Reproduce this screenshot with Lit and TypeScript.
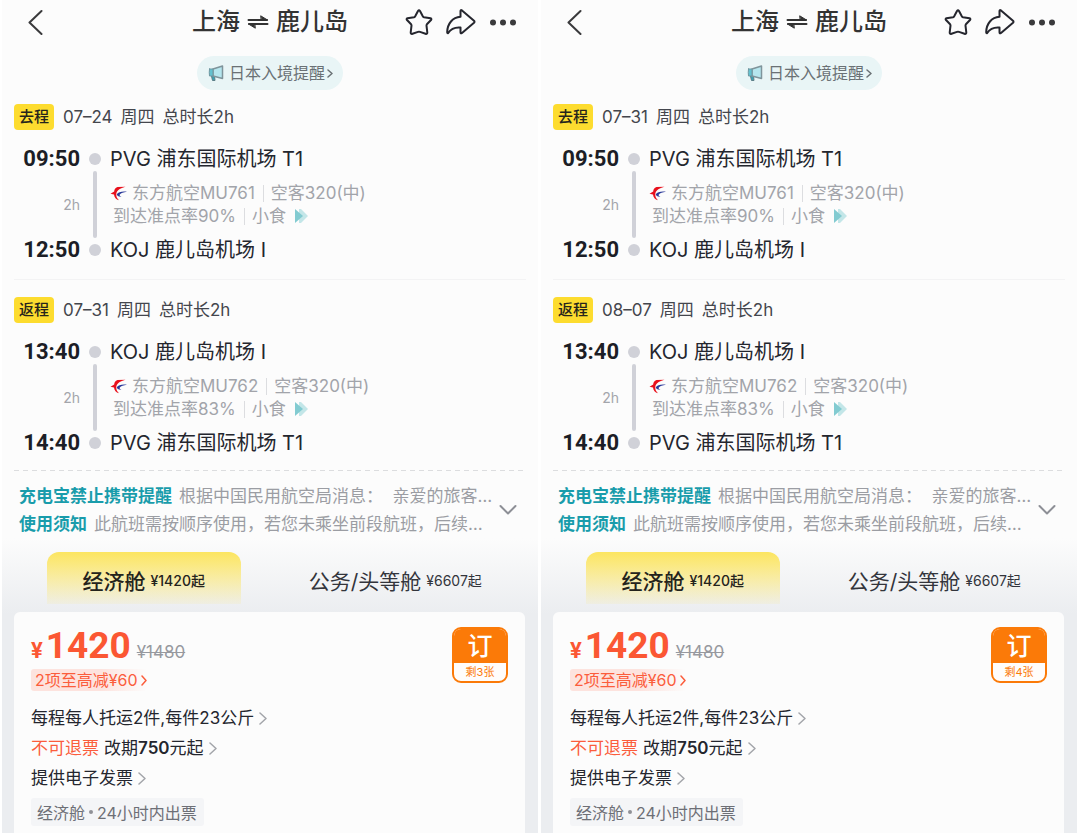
import { LitElement, html, css, svg } from "lit";
import { customElement, property } from "lit/decorators.js";

interface Leg {
  tag: string;
  date: string;
  depart: string;
  from: string;
  arrive: string;
  to: string;
  flight: string;
  onTime: string;
}

interface Trip {
  legs: Leg[];
  left: number;
}

const PVG = "PVG 浦东国际机场 T1";
const KOJ = "KOJ 鹿儿岛机场 I";

const makeTrip = (out: string, back: string, left: number): Trip => ({
  left,
  legs: [
    { tag: "去程", date: out, depart: "09:50", from: PVG, arrive: "12:50", to: KOJ, flight: "MU761", onTime: "90%" },
    { tag: "返程", date: back, depart: "13:40", from: KOJ, arrive: "14:40", to: PVG, flight: "MU762", onTime: "83%" },
  ],
});

const trips: Trip[] = [makeTrip("07–24", "07–31", 3), makeTrip("07–31", "08–07", 4)];

const reset = css`
  * {
    box-sizing: border-box;
  }
  button {
    font: inherit;
    color: inherit;
    background: none;
    border: 0;
    padding: 0;
    margin: 0;
    text-align: left;
    cursor: pointer;
  }
  p,
  h1 {
    margin: 0;
    padding: 0;
  }
  svg {
    display: block;
    flex: none;
    fill: none;
    stroke-linecap: round;
    stroke-linejoin: round;
  }
`;

const chevron = (w: number, h: number, color: string, stroke: number) => html`
  <svg width=${w} height=${h} viewBox="0 0 ${w} ${h}" aria-hidden="true">
    ${svg`<path d="M1 1 L${w - 1} ${h / 2} L1 ${h - 1}" stroke=${color} stroke-width=${stroke} />`}
  </svg>
`;

@customElement("flight-leg")
class FlightLeg extends LitElement {
  @property({ attribute: false }) leg!: Leg;

  static styles = [
    reset,
    css`
      :host {
        display: block;
      }
      .head {
        display: flex;
        align-items: center;
        gap: 9px;
        height: 26px;
        font-size: 17px;
        color: #44464d;
        white-space: nowrap;
      }
      .tag {
        display: grid;
        place-items: center;
        width: 40px;
        height: 26px;
        border-radius: 4px;
        background: #fddc2f;
        color: #26241c;
        font-size: 15px;
        line-height: 24px;
        font-weight: 500;
      }
      .words {
        display: flex;
        align-items: baseline;
        gap: 8px;
        line-height: 24px;
      }
      .timeline {
        display: grid;
        grid-template-columns: 66px 30px 1fr;
        grid-template-rows: 30px 61px 30px;
        margin-top: 14px;
        align-items: center;
      }
      .time {
        grid-column: 1;
        text-align: right;
        font: 700 22px/30px Roboto, sans-serif;
        color: #1c1e26;
      }
      .place {
        grid-column: 3;
        font-size: 20px;
        line-height: 30px;
        color: #24262e;
        white-space: nowrap;
      }
      .duration {
        grid-column: 1;
        text-align: right;
        font-size: 14px;
        color: #a3a5ab;
      }
      .rail {
        grid-column: 2;
        grid-row: 1 / 4;
        align-self: stretch;
        display: flex;
        flex-direction: column;
        align-items: center;
        gap: 6px;
        padding: 9px 0;
      }
      .dot {
        width: 12px;
        height: 12px;
        border-radius: 50%;
        background: #d0d1d8;
      }
      .bar {
        flex: 1;
        width: 4px;
        border-radius: 2px;
        background: #d0d1d8;
      }
      .info {
        grid-column: 3;
        font-size: 17px;
        line-height: 23px;
        color: #a2a4aa;
        white-space: nowrap;
      }
      .line {
        display: flex;
        align-items: center;
      }
      .line + .line {
        padding-left: 3px;
      }
      .logo {
        margin-right: 5px;
      }
      .sep {
        width: 1px;
        height: 17px;
        margin: 0 7px 0 8px;
        background: #dcdde0;
      }
      .more {
        margin-left: 9px;
      }
    `,
  ];

  render() {
    const l = this.leg;
    return html`
      <div class="head">
        <span class="tag">${l.tag}</span>
        <span class="words"><span>${l.date}</span><span>周四</span><span>总时长2h</span></span>
      </div>
      <div class="timeline">
        <span class="time">${l.depart}</span>
        <span class="rail"><i class="dot"></i><i class="bar"></i><i class="dot"></i></span>
        <span class="place">${l.from}</span>
        <span class="duration">2h</span>
        <div class="info">
          <div class="line">
            <svg class="logo" width="17" height="15" viewBox="0 0 17 15" aria-hidden="true">
              <path d="M15.500 0.800 L7.500 1 C5.300 1.500 4.300 3.500 4.200 5.500 L0.500 7.800 L4 8.500 C4.300 11.500 6 13.800 9 14.200 C7 12.500 6.200 10.500 6.300 8.500 C6.300 5 9 2.500 15.500 0.800Z" fill="#e8101c" />
              <path d="M17 5.800 C12 5.200 8.500 6 6.800 8.300 C7 10 8.500 11 11.500 10.800 C9.800 10.200 9.300 9.300 9.800 8.600 C11 7 13.500 6.200 17 5.800Z" fill="#2b3a9a" />
            </svg>
            <span>东方航空${l.flight}</span><i class="sep"></i><span>空客320(中)</span>
          </div>
          <div class="line">
            <span>到达准点率${l.onTime}</span><i class="sep"></i><span>小食</span>
            <button class="more" aria-label="餐食详情">
              <svg width="13" height="14" viewBox="0 0 13 14" aria-hidden="true">
                <path d="M4 0 L6 0 L13 7 L6 14 L4 14Z" fill="#c3e6e8" />
                <path d="M0 0 L8 7 L0 14Z" fill="#82cbd1" />
              </svg>
            </button>
          </div>
        </div>
        <span class="time">${l.arrive}</span>
        <span class="place">${l.to}</span>
      </div>
    `;
  }
}

@customElement("trip-panel")
class TripPanel extends LitElement {
  @property({ attribute: false }) trip!: Trip;

  static styles = [
    reset,
    css`
      :host {
        display: flex;
        flex-direction: column;
        min-width: 0;
        background: #fcfcfc;
        color: #24262e;
      }
      .header {
        display: grid;
        grid-template-columns: 1fr auto 1fr;
        align-items: center;
        height: 44px;
        padding: 0 21px;
      }
      .back {
        width: 26px;
        padding-left: 5px;
      }
      .title {
        display: flex;
        align-items: center;
        gap: 7px;
        font-size: 24px;
        line-height: 36px;
        font-weight: 500;
        color: #333;
        white-space: nowrap;
      }
      .actions {
        display: flex;
        justify-content: flex-end;
        gap: 13px;
      }
      .pill {
        display: flex;
        align-items: center;
        align-self: center;
        height: 34px;
        margin: 12px 0 14px;
        padding: 0 10px;
        border-radius: 17px;
        background: #e9f5f6;
        color: #6a7175;
        font-size: 16px;
        line-height: 32px;
        white-space: nowrap;
      }
      .pill-text {
        margin: 0 2px 0 4px;
      }
      .legs {
        padding: 0 12px;
      }
      .rule {
        height: 1px;
        margin: 14px 0 17px;
        background: #f3f3f4;
      }
      .dash {
        height: 1px;
        margin: 12px 12px 0;
        background: repeating-linear-gradient(90deg, #dcdddf 0 5px, transparent 5px 9px);
      }
      .notice {
        display: flex;
        align-items: center;
        gap: 2px;
        width: 100%;
        padding: 11px 21px 0 17px;
        font-size: 17px;
        line-height: 28px;
        color: #9b9da3;
      }
      .notice-lines {
        flex: 1;
        min-width: 0;
      }
      .notice-line {
        display: block;
        white-space: nowrap;
      }
      .notice-title {
        color: #199cab;
        font-weight: 700;
        margin-right: 7px;
      }
      .cabin {
        flex: 1;
        display: flex;
        flex-direction: column;
        padding: 14px 13px 0 12px;
        background: linear-gradient(#fcfcfc, #ebedf0 76px);
      }
      .tabs {
        display: grid;
        grid-template-columns: 1fr 1fr;
        gap: 58px;
        padding: 0 33px;
      }
      .tab {
        display: flex;
        align-items: center;
        justify-content: center;
        gap: 5px;
        height: 52px;
        padding-top: 4px;
        border-radius: 12px 12px 0 0;
        font-size: 21px;
        white-space: nowrap;
        color: #33353c;
      }
      .tab.on {
        background: linear-gradient(#fce560, #fce5601a);
        font-weight: 500;
        color: #24231c;
      }
      .tab-price {
        font-size: 14px;
      }
      .card {
        flex: 1;
        display: flex;
        align-items: flex-start;
        justify-content: space-between;
        margin-top: 8px;
        padding: 15px 17px 7px;
        border-radius: 6px 6px 0 0;
        background: #fcfcfc;
      }
      .offer {
        display: flex;
        flex-direction: column;
        align-items: flex-start;
      }
      .price {
        display: flex;
        align-items: baseline;
        height: 42px;
        color: #fb5733;
        font: 700 37px/38px Roboto, sans-serif;
      }
      .yen {
        font-size: 22px;
        margin-right: 3px;
      }
      .old {
        margin-left: 6px;
        font: 400 17px/20px Inter, sans-serif;
        color: #97999f;
        text-decoration: line-through;
      }
      .deal {
        display: flex;
        align-items: center;
        gap: 3px;
        height: 22px;
        padding: 0 0 0 4px;
        border-radius: 3px;
        background: linear-gradient(90deg, #fde3de 60%, #fde3de00);
        color: #fb5d3c;
        font-size: 16px;
        line-height: 22px;
      }
      .rows {
        padding-top: 12px;
      }
      .row {
        display: flex;
        align-items: center;
        gap: 5px;
        font-size: 17px;
        line-height: 30px;
        white-space: nowrap;
      }
      .warn {
        color: #fb5d3c;
      }
      .num {
        font-weight: 600;
      }
      .foot {
        display: flex;
        align-items: center;
        height: 28px;
        margin-top: 5px;
        padding: 0 7px 0 6px;
        border-radius: 3px;
        background: #f4f5f7;
        color: #6d6f76;
        font-size: 16px;
        white-space: nowrap;
      }
      .bullet {
        width: 4px;
        height: 4px;
        margin: 0 4px;
        border-radius: 50%;
        background: #8f9197;
      }
      .book {
        display: flex;
        flex-direction: column;
        width: 56px;
        height: 56px;
        border: 2px solid #fb7a08;
        border-radius: 9px;
        overflow: hidden;
        background: #fffdfb;
        text-align: center;
      }
      .book-main {
        height: 34px;
        background: #fb7a08;
        color: #fff;
        font-size: 25px;
        line-height: 34px;
        font-weight: 500;
      }
      .book-left {
        color: #fb7a08;
        font-size: 11px;
        line-height: 18px;
      }
    `,
  ];

  render() {
    const [out, back] = this.trip.legs;
    return html`
      <header class="header">
        <button class="back" aria-label="返回">
          <svg width="16" height="26" viewBox="0 0 16 26" aria-hidden="true">
            <path d="M13.500 2 L1.500 13.500 L13.500 25" stroke="#3a3a3c" stroke-width="2" />
          </svg>
        </button>
        <h1 class="title">
          <span>上海</span>
          <svg width="22" height="14" viewBox="0 0 22 14" role="img" aria-label="往返">
            <path d="M1.500 5 H20 M20.500 9 H2" stroke="#333" stroke-width="2" />
            <path d="M14 1 L20.500 5 H14.500Z M8 13 L1.500 9 H7.500Z" fill="#333" stroke="#333" stroke-width="1" />
          </svg>
          <span>鹿儿岛</span>
        </h1>
        <div class="actions">
          <button aria-label="收藏">
            <svg width="28" height="28" viewBox="0 0 28 28" aria-hidden="true">
              <path
                d="M13 3 Q14 1.500 15 3 L17.800 8.300 Q18.200 9 19 9.200 L25.500 10.300 Q27 10.800 26 12 L21.900 16.300 Q21.400 16.900 21.500 17.700 L22.300 24.500 Q22.300 26.400 20.500 25.800 L15 23.900 Q14 23.600 13 23.900 L7.500 25.800 Q5.700 26.400 5.700 24.500 L6.500 17.700 Q6.600 16.900 6.100 16.300 L2 12 Q1 10.800 2.500 10.300 L9 9.200 Q9.800 9 10.200 8.300Z"
                stroke="#25262e"
                stroke-width="2"
              />
            </svg>
          </button>
          <button aria-label="分享">
            <svg width="30" height="28" viewBox="0 0 30 28" aria-hidden="true">
              <path
                d="M14.500 3 Q14.500 1.500 16 2.400 L28 12.800 Q29 13.800 28 14.800 L16 25 Q14.500 26 14.500 24.300 V19.500 C8.500 19 5 20.500 2.200 25 Q1.200 25.500 1.200 24 C1.500 15.500 6.500 9.500 14.500 8.800Z"
                stroke="#25262e"
                stroke-width="2"
              />
            </svg>
          </button>
          <button aria-label="更多">
            <svg width="28" height="28" viewBox="0 0 28 28" aria-hidden="true">
              <g fill="#3a3a3c">
                <circle cx="4" cy="14.500" r="3" />
                <circle cx="14" cy="14.500" r="3" />
                <circle cx="24" cy="14.500" r="3" />
              </g>
            </svg>
          </button>
        </div>
      </header>

      <button class="pill">
        <svg width="18" height="18" viewBox="0 0 18 18" aria-hidden="true">
          <path d="M4 10 L5.500 16.500 H8 L7.500 12Z" fill="#3aa3b4" stroke="#5d7f88" stroke-width="1" />
          <path d="M6 5 L15.500 2 V14.500 L6 12Z" fill="#b5e6ee" stroke="#7f949b" stroke-width="1.500" />
          <path d="M2.500 5 H6 V12 H2.500 Q2 8.500 2.500 5Z" fill="#63c1cf" stroke="#6f97a1" stroke-width="1" />
        </svg>
        <span class="pill-text">日本入境提醒</span>
        ${chevron(6, 9, "#6a7175", 1.5)}
      </button>

      <div class="legs">
        <flight-leg .leg=${out}></flight-leg>
        <div class="rule"></div>
        <flight-leg .leg=${back}></flight-leg>
      </div>
      <div class="dash"></div>

      <button class="notice">
        <span class="notice-lines">
          <span class="notice-line"><span class="notice-title">充电宝禁止携带提醒</span>根据中国民用航空局消息：&nbsp; 亲爱的旅客…</span>
          <span class="notice-line"><span class="notice-title">使用须知</span>此航班需按顺序使用，若您未乘坐前段航班，后续…</span>
        </span>
        <svg width="18" height="12" viewBox="0 0 18 12" aria-hidden="true">
          <path d="M1.500 2 L9 9.500 L16.500 2" stroke="#8d8f96" stroke-width="2" />
        </svg>
      </button>

      <section class="cabin">
        <div class="tabs" role="tablist">
          <button class="tab on" role="tab" aria-selected="true">
            <span>经济舱</span><span class="tab-price">¥1420起</span>
          </button>
          <button class="tab" role="tab" aria-selected="false">
            <span>公务/头等舱</span><span class="tab-price">¥6607起</span>
          </button>
        </div>
        <div class="card">
          <div class="offer">
            <p class="price"><span class="yen">¥</span>1420<s class="old">¥1480</s></p>
            <button class="deal"><span>2项至高减¥60</span>${chevron(6, 11, "#fb5d3c", 1.5)}</button>
            <div class="rows">
              <button class="row"><span>每程每人托运2件,每件23公斤</span>${chevron(8, 13, "#a3a5aa", 1.5)}</button>
              <button class="row">
                <span class="warn">不可退票</span><span>改期<span class="num">750</span>元起</span>${chevron(8, 13, "#a3a5aa", 1.5)}
              </button>
              <button class="row"><span>提供电子发票</span>${chevron(8, 13, "#a3a5aa", 1.5)}</button>
            </div>
            <div class="foot"><span>经济舱</span><i class="bullet"></i><span>24小时内出票</span></div>
          </div>
          <button class="book">
            <span class="book-main">订</span>
            <span class="book-left">剩${this.trip.left}张</span>
          </button>
        </div>
      </section>
    `;
  }
}

@customElement("app-root")
class AppRoot extends LitElement {
  static styles = css`
    :host {
      display: grid;
      grid-template-columns: 1fr 1fr;
      gap: 3px;
      box-sizing: border-box;
      min-height: 100vh;
      padding: 0 3px 0 2px;
      background: #fff;
      font-family: Inter, "Noto Sans CJK SC", sans-serif;
    }
  `;

  render() {
    return trips.map((t) => html`<trip-panel .trip=${t}></trip-panel>`);
  }
}
